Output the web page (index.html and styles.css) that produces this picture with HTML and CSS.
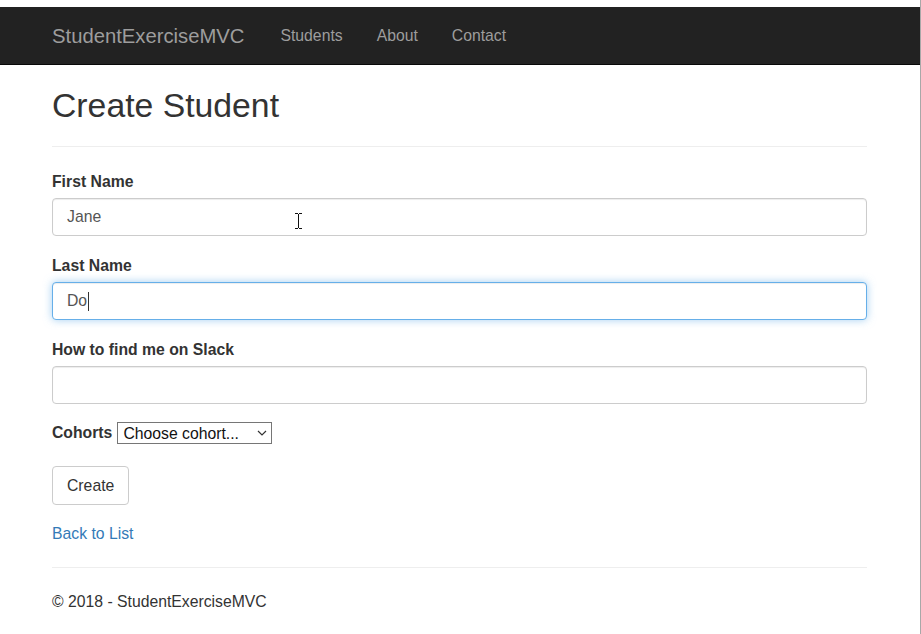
FILE: index.html
```html
<!DOCTYPE html>
<html lang="en">
<head>
<meta charset="utf-8">
<title>Create - StudentExerciseMVC</title>
<link rel="stylesheet" href="styles.css">
</head>
<body>
<div class="window">
  <div class="topstrip"></div>
  <nav class="navbar">
    <div class="nav-inner">
      <a class="brand" href="#">StudentExerciseMVC</a>
      <a class="nav-link" href="#">Students</a>
      <a class="nav-link" href="#">About</a>
      <a class="nav-link" href="#">Contact</a>
    </div>
  </nav>
  <main class="container">
    <h2 class="title">Create Student</h2>
    <hr class="rule">
    <form class="form">
      <div class="form-group">
        <label class="label">First Name</label>
        <div class="field">
          <input class="input" type="text" value="Jane">
          <svg class="ibeam" width="9" height="16" viewBox="0 0 9 16"><path d="M1 0.5h3M5 0.5h3M4.5 1v14M1 15.5h3M5 15.5h3" stroke="#111" stroke-width="1" fill="none"/></svg>
        </div>
      </div>
      <div class="form-group">
        <label class="label">Last Name</label>
        <div class="field">
          <input class="input input-focus" type="text" value="Do">
          <span class="caret"></span>
        </div>
      </div>
      <div class="form-group">
        <label class="label">How to find me on Slack</label>
        <div class="field">
          <input class="input" type="text" value="">
        </div>
      </div>
      <div class="form-group inline-group">
        <label class="label inline-label">Cohorts</label>
        <div class="select-wrap">
          <select class="select">
            <option>Choose cohort...</option>
          </select>
          <svg class="chev" width="10" height="6" viewBox="0 0 10 6"><path d="M1 1l4 4 4-4" stroke="#333" stroke-width="1.2" fill="none"/></svg>
        </div>
      </div>
      <div class="actions">
        <button class="btn" type="button">Create</button>
      </div>
    </form>
    <div class="back"><a href="#">Back to List</a></div>
    <hr class="rule footer-rule">
    <footer class="footer">
      <p>&copy; 2018 - StudentExerciseMVC</p>
    </footer>
  </main>
</div>
</body>
</html>
```

FILE: styles.css
```css
* { box-sizing: border-box; }
html, body { margin: 0; padding: 0; background: #fff; }
body {
  font-family: "Liberation Sans", Arial, Helvetica, sans-serif;
  font-size: 15.75px;
  line-height: 22.5px;
  color: #333;
}
.window {
  width: 921px;
  height: 634px;
  border-right: 1px solid #a8a8a8;
  overflow: hidden;
}
.topstrip { height: 7px; background: #fff; }
.navbar {
  height: 58px;
  background: #222;
  border-bottom: 1px solid #080808;
}
.nav-inner {
  display: flex;
  align-items: center;
  height: 57px;
  padding-top: 2px;
  padding-left: 52px;
}
.brand {
  color: #9d9d9d;
  font-size: 20.25px;
  text-decoration: none;
  margin-right: 36px;
}
.nav-link {
  color: #9d9d9d;
  font-size: 15.75px;
  text-decoration: none;
  margin-right: 34px;
}
.container {
  padding-left: 52px;
  width: 867px;
}
.title {
  margin: 22px 0 0;
  font-size: 33.75px;
  font-weight: 500;
  line-height: 37px;
  color: #333;
}
.rule {
  border: 0;
  border-top: 1px solid #eee;
  margin: 22px 0 0;
  height: 0;
}
.form { margin-top: 23px; }
.form-group { margin-bottom: 18px; }
.label {
  display: block;
  font-weight: bold;
  line-height: 22px;
  padding-top: 1px;
  margin-bottom: 5px;
}
.field { position: relative; }
.input {
  display: block;
  width: 100%;
  height: 38px;
  padding: 6px 14px;
  font-family: inherit;
  font-size: 15.75px;
  color: #555;
  background: #fff;
  border: 1px solid #ccc;
  border-radius: 4px;
  box-shadow: inset 0 1px 1px rgba(0,0,0,.075);
  outline: none;
}
.input-focus {
  border-color: #66afe9;
  box-shadow: inset 0 1px 1px rgba(0,0,0,.075), 0 0 8px rgba(102,175,233,.6);
}
.caret {
  position: absolute;
  left: 36px;
  top: 10px;
  width: 1px;
  height: 19px;
  background: #333;
}
.ibeam {
  position: absolute;
  left: 242px;
  top: 15px;
}
.inline-group {
  display: flex;
  align-items: center;
  gap: 5px;
  margin-top: 0;
  margin-bottom: 22px;
}
.inline-label { margin: 0; padding-top: 0; }
.select-wrap { position: relative; }
.select {
  display: block;
  appearance: none;
  -webkit-appearance: none;
  width: 155px;
  height: 22px;
  padding: 0 0 0 5px;
  font-family: inherit;
  font-size: 15.75px;
  color: #111;
  background: #fff;
  border: 1px solid #767676;
  border-radius: 0;
}
.chev {
  position: absolute;
  right: 5px;
  top: 8px;
  pointer-events: none;
}
.actions { margin-bottom: 18px; }
.btn {
  height: 39px;
  padding: 0 14px;
  font-family: inherit;
  font-size: 15.75px;
  color: #333;
  background: #fff;
  border: 1px solid #ccc;
  border-radius: 4px;
}
.back { line-height: 22px; }
.back a { color: #337ab7; text-decoration: none; }
.footer-rule { margin-top: 22px; }
.footer p { margin: 23px 0 0; line-height: 22px; }
```
